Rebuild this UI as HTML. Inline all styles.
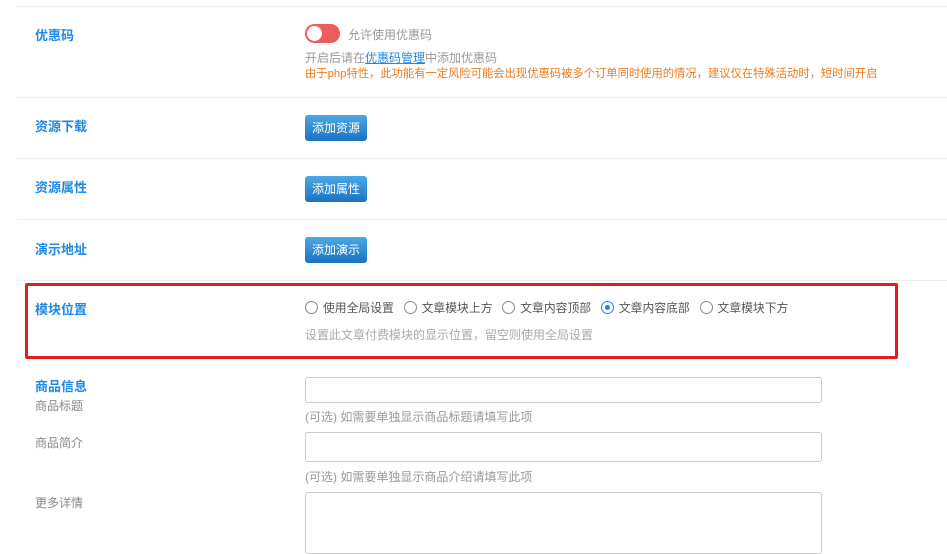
<!DOCTYPE html>
<html><head><meta charset="utf-8"><style>
body{margin:0;width:947px;height:524px;overflow:hidden;background:#fff;font-family:"Liberation Sans","Noto Sans CJK SC",sans-serif;font-size:12px;color:#888;position:relative}
.a{position:absolute;white-space:nowrap}
.t{color:#1e88e5;font-weight:bold;font-size:13px}
.hr{position:absolute;left:17px;right:0;height:1px;background:#eee}
.btn{position:absolute;left:305px;width:62px;height:26px;background:linear-gradient(#4ba8e6,#1a72c2);color:#fff;border-radius:3px;font-size:12px;line-height:26px;text-align:center}
.r{display:inline-block;width:11px;height:11px;border:1px solid #888;border-radius:50%;vertical-align:-2px;margin-right:5px;position:relative}
.in{position:absolute;left:305px;width:515px;border:1px solid #ccc;border-radius:3px;background:#fff}
</style></head><body>
<div class="hr" style="top:6px"></div>
<div class="a t" style="left:35px;top:25px">优惠码</div>
<div class="a" style="left:305px;top:24px;width:35px;height:19px;border-radius:10px;background:#ef5a5a"><div style="position:absolute;left:2px;top:2px;width:15px;height:15px;border-radius:50%;background:#fff"></div></div>
<div class="a" style="left:348px;top:26px;color:#999">允许使用优惠码</div>
<div class="a" style="left:305px;top:49px;color:#999">开启后请在<span style="color:#1e88e5;text-decoration:underline">优惠码管理</span>中添加优惠码</div>
<div class="a" style="left:305px;top:65px;color:#f07a1a;font-size:11.3px">由于php特性，此功能有一定风险可能会出现优惠码被多个订单同时使用的情况，建议仅在特殊活动时，短时间开启</div>
<div class="hr" style="top:97px"></div>
<div class="a t" style="left:35px;top:116px">资源下载</div>
<div class="btn" style="top:115px">添加资源</div>
<div class="hr" style="top:158px"></div>
<div class="a t" style="left:35px;top:177px">资源属性</div>
<div class="btn" style="top:176px">添加属性</div>
<div class="hr" style="top:219px"></div>
<div class="a t" style="left:35px;top:239px">演示地址</div>
<div class="btn" style="top:237px">添加演示</div>
<div class="hr" style="top:280px"></div>
<div class="a" style="left:25px;top:283px;width:867px;height:70px;border:3px solid #e0201c;border-radius:2px"></div>
<div class="a t" style="left:35px;top:299px">模块位置</div>
<div class="a" style="left:305px;top:299px;color:#555;font-size:11.8px">
<span class="r"></span>使用全局设置&nbsp;&nbsp;&nbsp;<span class="r"></span>文章模块上方&nbsp;&nbsp;&nbsp;<span class="r"></span>文章内容顶部&nbsp;&nbsp;&nbsp;<span class="r" style="border-color:#1e88e5"><span style="position:absolute;left:3px;top:3px;width:5px;height:5px;border-radius:50%;background:#1e88e5"></span></span>文章内容底部&nbsp;&nbsp;&nbsp;<span class="r"></span>文章模块下方</div>
<div class="a" style="left:305px;top:326px;color:#aaa">设置此文章付费模块的显示位置，留空则使用全局设置</div>
<div class="a t" style="left:35px;top:376px">商品信息</div>
<div class="a" style="left:35px;top:397px">商品标题</div>
<div class="in" style="top:377px;height:24px"></div>
<div class="a" style="left:305px;top:408px;color:#999">(可选) 如需要单独显示商品标题请填写此项</div>
<div class="a" style="left:35px;top:434px">商品简介</div>
<div class="in" style="top:432px;height:28px"></div>
<div class="a" style="left:305px;top:468px;color:#999">(可选) 如需要单独显示商品介绍请填写此项</div>
<div class="a" style="left:35px;top:494px">更多详情</div>
<div class="in" style="top:492px;height:60px"></div>
</body></html>
